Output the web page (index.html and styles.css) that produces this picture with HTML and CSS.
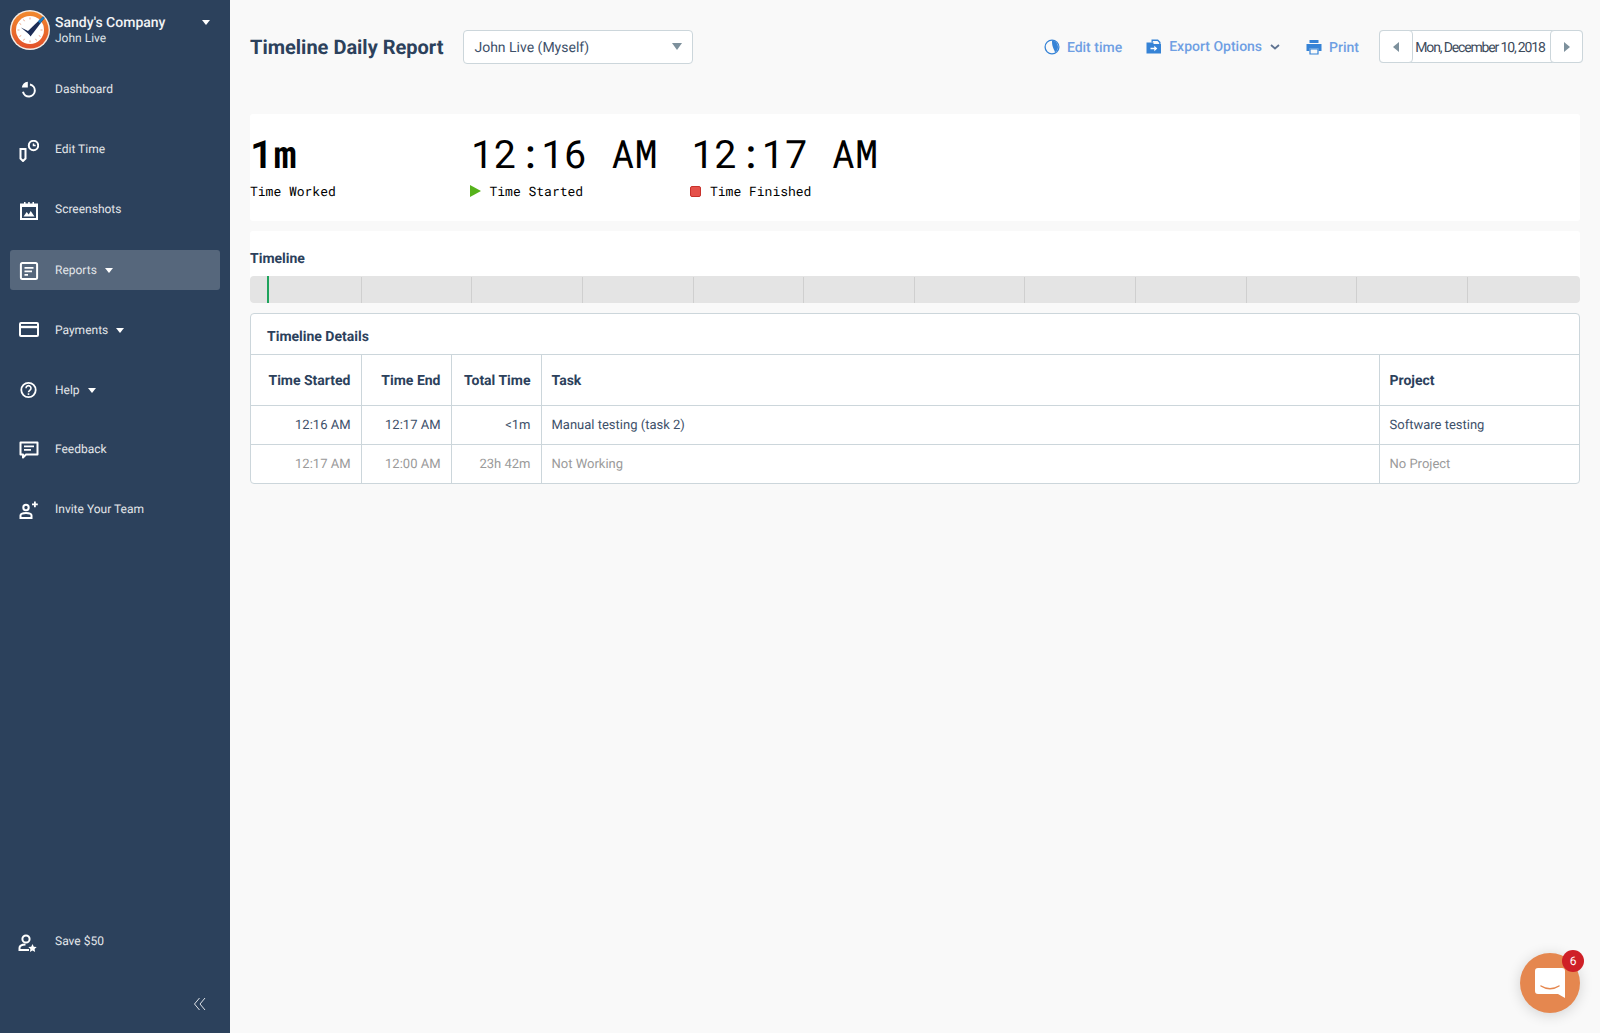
FILE: index.html
```html
<!DOCTYPE html>
<html lang="en">
<head>
<meta charset="utf-8">
<title>Timeline Daily Report</title>
<link rel="stylesheet" href="styles.css">
</head>
<body>
<div class="app">
  <aside class="sidebar">
    <div class="brand">
      <svg class="logo" viewBox="0 0 40 40">
        <defs><linearGradient id="ring" x1="0" y1="0" x2="0" y2="1"><stop offset="0" stop-color="#f28a2e"/><stop offset="1" stop-color="#e2502a"/></linearGradient></defs>
        <circle cx="20" cy="20" r="20" fill="#f4ede6"/>
        <circle cx="20" cy="20" r="18.6" fill="url(#ring)"/>
        <circle cx="20" cy="20" r="14" fill="#fff"/>
        <g stroke="#e8a58a" stroke-width="1"><path d="M20 7.500v2M20 30.500v2M7.500 20h2M30.500 20h2M13.500 9.500l1 1.700M9.500 13.500l1.700 1M9.500 26.500l1.700-1M13.500 30.500l1-1.700M26.500 30.500l-1-1.700M30.500 26.500l-1.700-1"/></g>
        <path d="M11 17.500l9 4.500 1 4z" fill="#1d2d57"/>
        <path d="M17.500 21.500L33 6.500l1.600 1.400L20.500 26.500z" fill="#1d2d57"/>
        <path d="M28 11.300l5-4.800 1.600 1.400-4.600 5.700z" fill="#1f7ec2"/>
      </svg>
      <div class="brand-text">
        <div class="company">Sandy's Company</div>
        <div class="user">John Live</div>
      </div>
      <span class="caret brand-caret"></span>
    </div>
    <nav class="nav">
      <a class="nav-item"><svg class="icon" viewBox="0 0 20 20"><path d="M8.800 1.800A7 7 0 0 0 2.800 7.500h6z" fill="currentColor"/><path d="M11 4.600a6 6 0 1 1-7 7.200" fill="none" stroke="currentColor" stroke-width="2"/></svg><span class="nav-label">Dashboard</span></a>
      <a class="nav-item"><svg class="icon icon-tall" viewBox="0 0 20 22"><path d="M1.500 9h5v9.500L4 21 1.500 18.500z" fill="none" stroke="currentColor" stroke-width="2"/><circle cx="14.500" cy="5.500" r="4.700" fill="none" stroke="currentColor" stroke-width="2"/><path d="M14.500 3.500v2h2.200" fill="none" stroke="currentColor" stroke-width="1.500"/></svg><span class="nav-label">Edit Time</span></a>
      <a class="nav-item"><svg class="icon icon-low" viewBox="0 0 20 20"><path d="M2 3.500h16V18H2z" fill="none" stroke="currentColor" stroke-width="2"/><path d="M2 3h16v3H2zM5 1h1.500v3H5zM9.200 1h1.500v3H9.200zM13.500 1H15v3h-1.500z" fill="currentColor"/><path d="M4.500 15.500l3.200-4.500 2 2.400 2-3.400 3.800 5.500z" fill="currentColor"/></svg><span class="nav-label">Screenshots</span></a>
      <a class="nav-item active"><svg class="icon icon-low" viewBox="0 0 20 20"><rect x="1.900" y="1.900" width="16.200" height="16.200" rx="1.500" fill="none" stroke="currentColor" stroke-width="2"/><path d="M5.500 6h9v1.800h-9zM5.500 9.500h7.500v1.800H5.500zM5.500 13H9v1.800H5.500z" fill="currentColor"/></svg><span>Reports</span><span class="caret"></span></a>
      <a class="nav-item"><svg class="icon" viewBox="0 0 20 20"><rect x="1" y="2.900" width="18" height="13.200" rx="1" fill="none" stroke="currentColor" stroke-width="2"/><path d="M2 5.800h16v2.400H2z" fill="currentColor"/></svg><span>Payments</span><span class="caret"></span></a>
      <a class="nav-item"><svg class="icon" viewBox="0 0 20 20"><circle cx="9.500" cy="10" r="7.200" fill="none" stroke="currentColor" stroke-width="1.800"/><path d="M7 8.200a2.500 2.500 0 1 1 3.800 2.100c-.9.600-1.300 1-1.300 2" fill="none" stroke="currentColor" stroke-width="1.600"/><path d="M8.700 13.300h1.600v1.600H8.700z" fill="currentColor"/></svg><span>Help</span><span class="caret"></span></a>
      <a class="nav-item"><svg class="icon" viewBox="0 0 20 20"><path d="M1.500 2.500h17v12H7l-3 3v-3H1.500z" fill="none" stroke="currentColor" stroke-width="2" stroke-linejoin="round"/><path d="M5 5.500h10v1.700H5zM5 9h7v1.700H5z" fill="currentColor"/></svg><span class="nav-label">Feedback</span></a>
      <a class="nav-item"><svg class="icon" viewBox="0 0 20 20"><circle cx="7" cy="7.500" r="2.700" fill="none" stroke="currentColor" stroke-width="2"/><path d="M1.500 18v-2.500c0-1.600 2.200-2.500 5.500-2.500s5.500 .9 5.500 2.500V18z" fill="none" stroke="currentColor" stroke-width="2"/><path d="M13 3.500h2v-2h1.800v2h2v1.700h-2v2H15v-2h-2z" fill="currentColor"/></svg><span class="nav-label">Invite Your Team</span></a>
    </nav>
    <div class="sidebar-bottom">
      <a class="nav-item"><svg class="icon icon-low icon-left" viewBox="0 0 20 20"><circle cx="8" cy="6" r="3.600" fill="none" stroke="currentColor" stroke-width="2"/><path d="M11 17H1.500v-2c0-2.200 2.500-3.500 6-3.500" fill="none" stroke="currentColor" stroke-width="2"/><path d="M14.500 11l1.300 2.700 2.900.4-2.100 2 .5 2.900-2.600-1.400-2.600 1.400.5-2.900-2.100-2 2.900-.4z" fill="currentColor"/></svg><span class="nav-label">Save $50</span></a>
      <div class="collapse"><svg viewBox="0 0 14 14" width="14" height="14"><path d="M6.500 1L1.500 7l5 6M12 1L7 7l5 6" fill="none" stroke="currentColor" stroke-width="1"/></svg></div>
    </div>
  </aside>

  <main class="main">
    <header class="topbar">
      <h1 class="title">Timeline Daily Report</h1>
      <div class="select"><span class="nudge">John Live (Myself)</span><span class="select-arrow"></span></div>
      <div class="actions">
        <a class="action action-edit"><svg class="a-icon" viewBox="0 0 16 16"><circle cx="8" cy="8" r="6.900" fill="none" stroke="currentColor" stroke-width="1.300"/><path d="M8 1.500c3 0 6 2.500 6 6.500 0 2.500-1.200 4.300-3 5.300C10.500 10.500 7.800 8.500 8 1.500z" fill="currentColor"/></svg><span class="nudge">Edit time</span></a>
        <a class="action action-export"><svg class="a-icon" viewBox="0 0 16 16"><path d="M5.500 0.600h6.500l2.500 2.500V5h-1.300V3.700L11.500 1.900h-4.700V3.500H5.500z" fill="#3683d6"/><path d="M0.500 3.500H7.500V5H15v9.500H0.500z" fill="#3683d6"/><path d="M4.500 8.700h3.800V6.800l3 2.700-3 2.700v-1.900H4.500z" fill="#fff"/></svg><span>Export Options</span><svg class="chev" viewBox="0 0 10 6"><path d="M1 1l4 3.500L9 1" fill="none" stroke="#5f7391" stroke-width="1.800"/></svg></a>
        <a class="action action-print"><svg class="a-icon" viewBox="0 0 16 16"><path d="M3.500 1h9v3h-9z" fill="#3683d6"/><path d="M0.500 5h15v7h-3V9.500h-9V12h-3z" fill="#3683d6"/><path d="M4 10h8v5H4z" fill="none" stroke="#3683d6" stroke-width="1.200"/></svg><span class="nudge">Print</span></a>
      </div>
      <div class="datepick">
        <button class="date-btn date-prev"><span class="tri tri-left"></span></button>
        <span class="date-text nudge">Mon, December 10, 2018</span>
        <button class="date-btn"><span class="tri tri-right"></span></button>
      </div>
    </header>

    <section class="stats">
      <div class="stat">
        <div class="stat-value bold">1m</div>
        <div class="stat-label">Time Worked</div>
      </div>
      <div class="stat">
        <div class="stat-value">12:16 AM</div>
        <div class="stat-label"><span class="mark-play"></span>Time Started</div>
      </div>
      <div class="stat">
        <div class="stat-value">12:17 AM</div>
        <div class="stat-label"><span class="mark-stop"></span>Time Finished</div>
      </div>
    </section>

    <section class="timeline">
      <h2 class="timeline-title">Timeline</h2>
      <div class="track">
        <i class="tick first"></i><i class="tick"></i><i class="tick"></i><i class="tick"></i><i class="tick"></i><i class="tick"></i><i class="tick"></i><i class="tick"></i><i class="tick"></i><i class="tick"></i><i class="tick"></i><i class="tick last"></i>
        <span class="track-mark"></span>
      </div>
    </section>

    <section class="details">
      <h3 class="details-title">Timeline Details</h3>
      <table class="table">
        <colgroup><col class="c1"><col class="c2"><col class="c3"><col class="c4"><col class="c5"></colgroup>
        <thead>
          <tr><th class="num">Time Started</th><th class="num">Time End</th><th class="num">Total Time</th><th>Task</th><th>Project</th></tr>
        </thead>
        <tbody>
          <tr><td class="num">12:16 AM</td><td class="num">12:17 AM</td><td class="num">&lt;1m</td><td>Manual testing (task 2)</td><td>Software testing</td></tr>
          <tr class="idle"><td class="num">12:17 AM</td><td class="num">12:00 AM</td><td class="num">23h 42m</td><td>Not Working</td><td>No Project</td></tr>
        </tbody>
      </table>
    </section>
  </main>
</div>
<div class="chat">
  <svg viewBox="0 0 32 32" width="32" height="32"><path d="M4 1h24a3 3 0 0 1 3 3v27l-7-4H4a3 3 0 0 1-3-3V4a3 3 0 0 1 3-3z" fill="#fff"/><path d="M7 19c5 3.500 13 3.500 18 0" fill="none" stroke="#e5874f" stroke-width="1.500" stroke-linecap="round"/></svg>
  <span class="badge">6</span>
</div>
</body>
</html>
```
FILE: styles.css
```css
* { box-sizing: border-box; }
html, body { margin: 0; height: 100%; }
body { font-family: Roboto, "Noto Sans", sans-serif; background: #f9f9f9; color: #2c415c; overflow: hidden; text-rendering: geometricPrecision; }
a { text-decoration: none; color: inherit; }
h1, h2, h3 { margin: 0; }

.app { display: flex; height: 1033px; }

.sidebar { width: 230px; flex: none; background: #2c415c; color: #e3e6ea; display: flex; flex-direction: column; padding: 0 10px; }
.brand { display: flex; align-items: center; height: 60px; }
.logo { width: 40px; height: 40px; flex: none; }
.brand-text { margin-left: 5px; flex: 1; }
.company { font-size: 14px; font-weight: 500; line-height: 16px; color: #f2f3f5; margin-top: 1px; }
.user { font-size: 12px; line-height: 15px; color: #dfe3e8; margin-bottom: 1px; }
.caret { display: inline-block; width: 0; height: 0; border-left: 4px solid transparent; border-right: 4px solid transparent; border-top: 5px solid #fff; }
.brand-caret { margin-right: 10px; margin-top: -16px; }

.nav { display: flex; flex-direction: column; gap: 20px; margin-top: 10px; }
.nav-item { display: flex; align-items: center; height: 40px; padding-left: 9px; font-size: 12px; border-radius: 3px; }
.nav-item.active { background: #56677c; }
.nav-item .caret { margin-left: 8px; }
.nav-label { margin-bottom: 2px; }
.icon { width: 20px; height: 20px; margin-right: 16px; flex: none; color: #fff; }
.icon-low { margin-top: 2px; }
.icon-tall { height: 22px; margin-top: 2px; }
.icon-left { margin-left: -1px; margin-right: 17px; }

.sidebar-bottom { margin-top: auto; }
.collapse { display: flex; justify-content: flex-end; padding: 0 13px 22px 0; margin-top: 35px; color: #dfe3e8; }

.main { flex: 1; min-width: 0; padding: 30px 20px 0; }

.topbar { display: flex; align-items: center; height: 33px; }
.title { font-size: 20px; font-weight: 700; color: #2c415c; white-space: nowrap; }
.nudge { margin-top: 2px; }
.select { width: 230px; height: 34px; margin-left: 20px; background: #fff; border: 1px solid #ccd6db; border-radius: 4px; display: flex; align-items: center; justify-content: space-between; padding: 0 10px; font-size: 14px; color: #3d5069; }
.select-arrow { width: 0; height: 0; border-left: 5px solid transparent; border-right: 5px solid transparent; border-top: 7px solid #7d909c; margin-top: -1px; }

.actions { display: flex; align-items: center; margin-left: auto; }
.action { display: flex; align-items: center; font-size: 14px; font-weight: 500; color: #6f9fe3; }
.a-icon { width: 16px; height: 16px; margin-right: 7px; color: #3683d6; flex: none; }
.action-edit { margin-right: 24px; }
.action-export { margin-right: 26px; }
.chev { width: 10px; height: 6px; margin-left: 8px; }
.action-print { margin-right: 20px; }

.datepick { display: flex; align-items: center; height: 33px; width: 204px; margin-right: -3px; background: #fff; border: 1px solid #ccd6db; border-radius: 4px; }
.date-btn { width: 33px; height: 33px; margin: -1px; background: #fff; border: 1px solid #ccd6db; border-radius: 4px; padding: 0; display: flex; align-items: center; justify-content: center; flex: none; }
.date-prev { width: 34px; }
.date-text { flex: 1; text-align: center; font-size: 14px; letter-spacing: -1.15px; white-space: nowrap; color: #3d4b5c; padding-right: 3px; }
.tri { width: 0; height: 0; border-top: 5px solid transparent; border-bottom: 5px solid transparent; }
.tri-left { border-right: 6px solid #7d909c; }
.tri-right { border-left: 6px solid #7d909c; }

.stats { margin-top: 51px; height: 107px; background: #fff; border-radius: 3px; display: flex; font-family: "Roboto Mono", "DejaVu Sans Mono", "Liberation Mono", monospace; color: #000; padding-top: 16px; }
.stat { width: 220.500px; }
.stat-value { font-size: 39px; line-height: 46px; white-space: nowrap; }
.stat-value.bold { font-weight: 600; }
.stat-label { font-size: 13px; line-height: 16px; margin-top: 7px; display: flex; align-items: center; margin-left: -1px; }
.stat:first-child .stat-label { margin-left: 0; }
.mark-play { width: 0; height: 0; border-top: 6px solid transparent; border-bottom: 6px solid transparent; border-left: 11px solid #56b21c; margin-right: 9px; }
.mark-stop { width: 11px; height: 11px; border-radius: 2px; background: #e5514a; border: 1px solid #c8322c; margin-right: 9px; }

.timeline { margin: 10px 0; background: #fff; padding-top: 20px; height: 72px; border-radius: 3px; }
.timeline-title { font-size: 14px; font-weight: 700; line-height: 16px; color: #2c415c; }
.track { position: relative; display: flex; height: 27px; margin-top: 9px; background: #e4e4e4; border-radius: 4px; padding-top: 1px; }
.tick { flex: 0 0 110.600px; border-right: 1px solid #cfcfcf; }
.tick.first { flex-basis: 111.800px; }
.tick.last { flex: 1; border-right: 0; }
.track-mark { position: absolute; left: 17px; top: 0; bottom: 0; width: 2px; background: #1fa35c; }

.details { background: #fff; border: 1px solid #ccd6db; border-radius: 4px; }
.details-title { font-size: 14px; font-weight: 700; line-height: 46px; padding-left: 16px; height: 40px; color: #2c415c; }
.table { width: 100%; border-collapse: collapse; table-layout: fixed; font-size: 13px; color: #3d5069; }
.c1 { width: 110px; }
.c2, .c3 { width: 90px; }
.c5 { width: 200px; }
.table th, .table td { border: 1px solid #ccd6db; padding: 0 10px; text-align: left; }
.table th:first-child, .table td:first-child { border-left: 0; }
.table th:last-child, .table td:last-child { border-right: 0; }
.table th { height: 51px; padding-top: 2px; font-size: 14px; font-weight: 700; color: #2c415c; }
.table td { height: 39px; }
.table tbody tr:last-child td { border-bottom: 0; height: 38px; padding-top: 1px; }
.table .num { text-align: right; }
.idle td { color: #9a9a9a; }

.chat { position: fixed; left: 1520px; top: 953px; width: 60px; height: 60px; border-radius: 50%; background: #e5874f; box-shadow: 0 2px 14px rgba(0,0,0,.16); display: flex; align-items: center; justify-content: center; }
.badge { position: absolute; left: 42px; top: -3px; width: 22px; height: 22px; border-radius: 50%; background: #cf2027; color: #fff; font-size: 12px; line-height: 22px; text-align: center; }
```
